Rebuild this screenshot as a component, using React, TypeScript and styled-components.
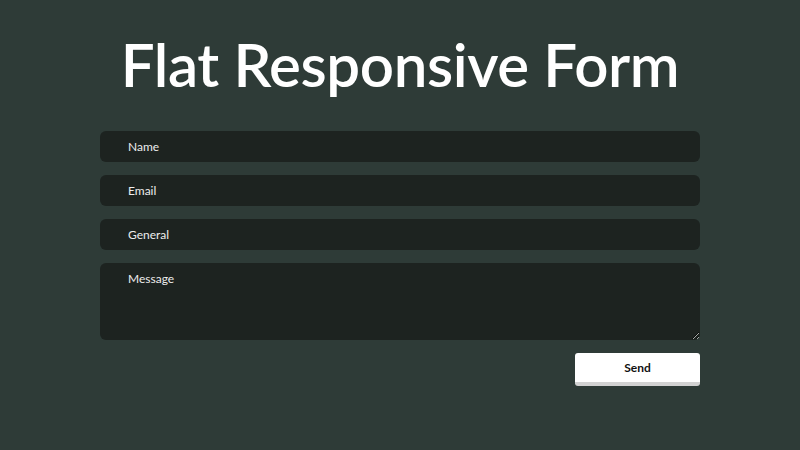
import React from 'react'
import styled, { createGlobalStyle } from 'styled-components'

const GlobalStyle = createGlobalStyle`
    html, body {
        margin: 0;
        padding: 0;
        background: #2e3b37;
    }
    * {
        box-sizing: border-box;
    }
`

const Page = styled.div`
    width: 800px;
    height: 450px;
    background: #2e3b37;
    font-family: Lato, 'Noto Sans', sans-serif;
    display: flex;
    flex-direction: column;
    align-items: center;
    padding-top: 24px;
`
const Title = styled.h1`
    margin: 0 0 27px;
    color: #ffffff;
    font-size: 60px;
    font-weight: 600;
    line-height: 80px;
    letter-spacing: -0.4px;
`
const Form = styled.form`
    width: 600px;
    display: flex;
    flex-direction: column;
    gap: 13px;
`
const fieldStyles = `
    width: 100%;
    border: none;
    outline: none;
    border-radius: 6px;
    background: #1d2320;
    color: #ededed;
    font-family: Lato, 'Noto Sans', sans-serif;
    font-size: 12px;
    padding: 0 28px;
    &::placeholder {
        color: #ededed;
        opacity: 1;
    }
`
const Input = styled.input`
    ${fieldStyles}
    height: 31px;
`
const TextArea = styled.textarea`
    ${fieldStyles}
    height: 77px;
    padding-top: 8px;
    resize: vertical;
`
const Actions = styled.div`
    display: flex;
    justify-content: flex-end;
`
const SendButton = styled.button`
    width: 125px;
    height: 33px;
    border: none;
    border-radius: 3px;
    background: #ffffff;
    border-bottom: 4px solid #d2d2d2;
    color: #111;
    font-family: Lato, 'Noto Sans', sans-serif;
    font-size: 12px;
    font-weight: 700;
    cursor: pointer;
`

export default function App() {
    return (
        <Page>
            <GlobalStyle />
            <Title>Flat Responsive Form</Title>
            <Form>
                <Input placeholder="Name" />
                <Input placeholder="Email" />
                <Input placeholder="General" />
                <TextArea placeholder="Message" />
                <Actions>
                    <SendButton type="button">Send</SendButton>
                </Actions>
            </Form>
        </Page>
    )
}
